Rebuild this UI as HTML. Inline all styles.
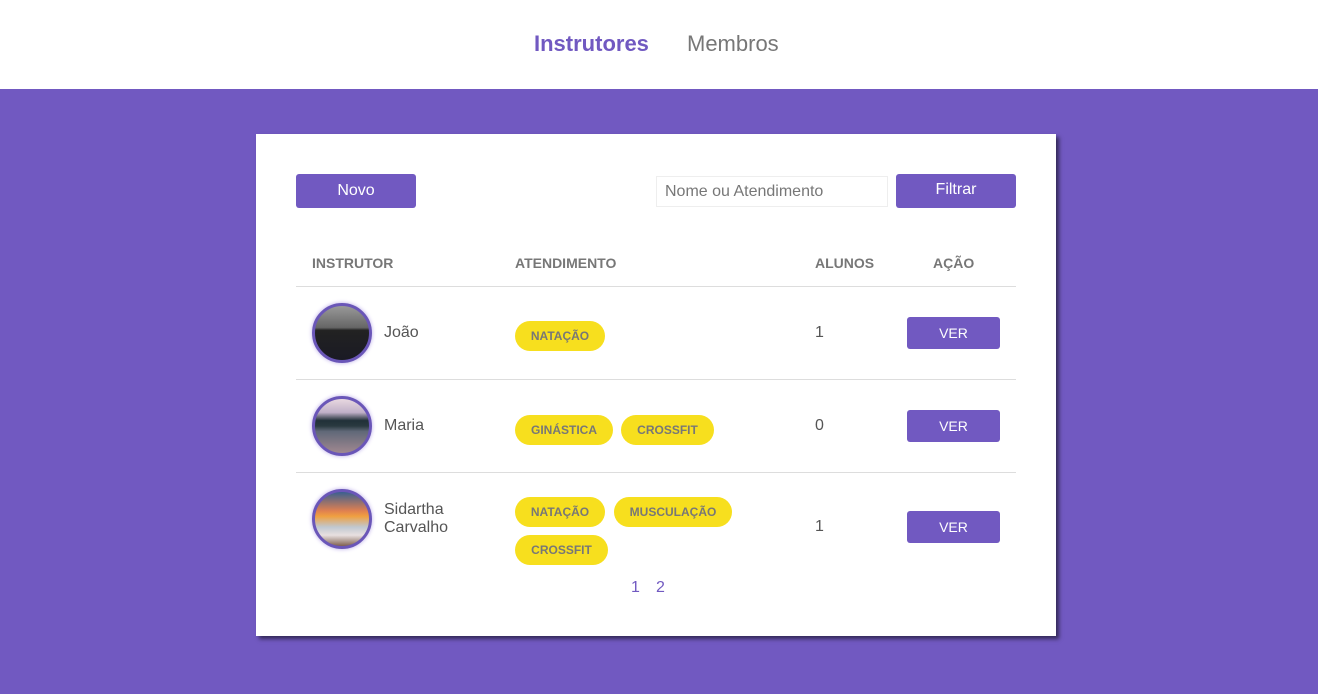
<!DOCTYPE html>
<html><head><meta charset="utf-8"><style>
*{margin:0;padding:0;box-sizing:border-box}
body{width:1318px;height:694px;background:#7159c1;font-family:"Liberation Sans",sans-serif;position:relative;overflow:hidden}
.hdr{position:absolute;left:0;top:0;width:1318px;height:89px;background:#fff}
.hdr a{position:absolute;top:31px;font-size:22px;text-decoration:none}
.card{position:absolute;left:256px;top:134px;width:800px;height:502px;background:#fff;box-shadow:3px 3px 4px rgba(0,0,0,.55)}
.abs{position:absolute}
.btn{position:absolute;background:#7159c1;color:#fff;border-radius:3px;text-align:center}
.th{position:absolute;top:121px;font-size:14px;font-weight:bold;color:#777}
.line{position:absolute;left:40px;width:720px;height:1px;background:#ddd}
.av{position:absolute;left:56px;width:60px;height:60px;border-radius:50%;border:3px solid #6a56b8;box-shadow:0 0 4px #b8a8e8}
.nm{position:absolute;left:128px;font-size:16px;color:#555;line-height:18px}
.bd{position:absolute;height:30px;line-height:30px;border-radius:15px;background:#f7df1e;color:#777;font-size:12px;font-weight:bold;text-align:center}
.num{position:absolute;left:559px;font-size:16px;color:#555}
.ver{position:absolute;left:651px;width:93px;height:32px;line-height:32px;font-size:14px}
</style></head><body>
<div class="hdr">
<a style="left:534px;color:#7159c1;font-weight:bold">Instrutores</a>
<a style="left:687px;color:#777">Membros</a>
</div>
<div class="card">
<div class="btn" style="left:40px;top:40px;width:120px;height:34px;line-height:34px;font-size:16px">Novo</div>
<div class="abs" style="left:400px;top:42px;width:232px;height:31px;border:1px solid #eee;font-size:16px;color:#777;padding:6px 8px">Nome ou Atendimento</div>
<div class="btn" style="left:640px;top:40px;width:120px;height:34px;line-height:32px;font-size:16px">Filtrar</div>
<div class="th" style="left:56px">INSTRUTOR</div>
<div class="th" style="left:259px">ATENDIMENTO</div>
<div class="th" style="left:559px">ALUNOS</div>
<div class="th" style="left:677px">AÇÃO</div>
<div class="line" style="top:152px"></div>
<div class="line" style="top:245px"></div>
<div class="line" style="top:338px"></div>

<div class="av" style="top:169px;background:linear-gradient(#999 0%,#666 40%,#222 45%,#1a1a24 100%)"></div>
<div class="nm" style="top:190px">João</div>
<div class="bd" style="left:259px;top:187px;width:90px">NATAÇÃO</div>
<div class="num" style="top:190px">1</div>
<div class="btn ver" style="top:183px">VER</div>

<div class="av" style="top:262px;background:linear-gradient(#e8d8e0 0%,#c0b0c8 25%,#203038 40%,#2a3a40 50%,#606878 60%,#a08890 100%)"></div>
<div class="nm" style="top:283px">Maria</div>
<div class="bd" style="left:259px;top:281px;width:98px">GINÁSTICA</div>
<div class="bd" style="left:365px;top:281px;width:93px">CROSSFIT</div>
<div class="num" style="top:283px">0</div>
<div class="btn ver" style="top:276px">VER</div>

<div class="av" style="top:355px;background:linear-gradient(#3a6090 0%,#e08050 35%,#f0a040 45%,#c0c8d0 65%,#e8e0e0 80%,#806050 100%)"></div>
<div class="nm" style="top:367px">Sidartha<br>Carvalho</div>
<div class="bd" style="left:259px;top:363px;width:90px">NATAÇÃO</div>
<div class="bd" style="left:358px;top:363px;width:118px">MUSCULAÇÃO</div>
<div class="bd" style="left:259px;top:401px;width:93px">CROSSFIT</div>
<div class="num" style="top:384px">1</div>
<div class="btn ver" style="top:377px">VER</div>

<div class="abs" style="left:375px;top:445px;font-size:16px;color:#7159c1">1</div>
<div class="abs" style="left:400px;top:445px;font-size:16px;color:#7159c1">2</div>
</div>
</body></html>
